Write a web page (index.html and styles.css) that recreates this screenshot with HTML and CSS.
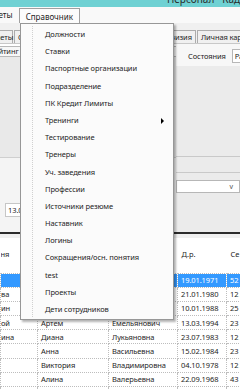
FILE: index.html
```html
<!DOCTYPE html>
<html lang="ru">
<head>
  <meta charset="UTF-8">
  <title>Персонал</title>
  <link rel="stylesheet" href="styles.css">
</head>
<body>
  <div class="window">

    <!-- title bar, mostly scrolled off the top -->
    <div class="titlebar">
      <span class="title">Персонал</span>
      <span class="title">Кадры</span>
    </div>

    <!-- main menu -->
    <div class="menubar">
      <span class="menu-item cut">Отчеты</span>
      <span class="menu-item open">Справочник</span>
    </div>

    <div class="strip"></div>

    <!-- page tabs -->
    <div class="tabs">
      <div class="tab cut">Отчеты</div>
      <div class="tab">Сотрудники</div>
      <div class="tab-gap"></div>
      <div class="tab revision">Ревизия</div>
      <div class="tab">Личная карточка</div>
    </div>

    <div class="content">
      <div class="left">
        <div class="head-row"><span class="cut-text">Рейтинг</span></div>
        <div class="gray-box"></div>
        <div class="white-box">
          <div class="date-input">13.01.2024</div>
        </div>
      </div>
      <div class="right">
        <div class="filter-row">
          <span class="label">Состояния</span>
          <span class="combo small">Работает</span>
        </div>
        <div class="gray-area">
          <div class="rule first"></div>
          <div class="rule"></div>
          <div class="combo wide"><span class="arrow">v</span></div>
        </div>
      </div>
    </div>

    <div class="divider"></div>

    <table class="grid">
      <colgroup>
        <col class="c-last"><col class="c-first"><col class="c-mid"><col class="c-date"><col class="c-age">
      </colgroup>
      <thead>
        <tr><th>ня</th><th>Имя</th><th>Отчество</th><th>Д.р.</th><th>Се</th></tr>
      </thead>
      <tbody id="rows"></tbody>
    </table>
  </div>

  <!-- open dropdown of "Справочник" -->
  <div class="dropdown">
    <div class="dd-item">Должности</div>
    <div class="dd-item">Ставки</div>
    <div class="dd-item">Паспортные организации</div>
    <div class="dd-item">Подразделение</div>
    <div class="dd-item">ПК Кредит Лимиты</div>
    <div class="dd-item sub">Тренинги</div>
    <div class="dd-item">Тестирование</div>
    <div class="dd-item">Тренеры</div>
    <div class="dd-item">Уч. заведения</div>
    <div class="dd-item">Профессии</div>
    <div class="dd-item">Источники резюме</div>
    <div class="dd-item">Наставник</div>
    <div class="dd-item">Логины</div>
    <div class="dd-item">Сокращения/осн. понятия</div>
    <div class="dd-item">test</div>
    <div class="dd-item">Проекты</div>
    <div class="dd-item">Дети сотрудников</div>
  </div>

  <script>
    const people = [
      ["", "", "", "19.01.1971", "52 г."],
      ["ва", "", "", "21.01.1980", "12 л."],
      ["ин", "", "", "10.01.1988", "25 л."],
      ["ой", "Артем", "Емельянович", "13.03.1994", "23"],
      ["ина", "Диана", "Лукьяновна", "23.07.1983", "12 л."],
      ["", "Анна", "Васильевна", "15.02.1984", "23"],
      ["", "Виктория", "Владимировна", "04.10.1978", "12 л."],
      ["", "Алина", "Валерьевна", "22.09.1968", "43 г."],
      ["", "Наталья", "Андреевна", "10.11.1989", "22"]
    ];

    const tbody = document.getElementById("rows");
    people.forEach((p, i) => {
      const tr = document.createElement("tr");
      if (i === 0) tr.className = "selected";
      tr.innerHTML = p.map(v => `<td>${v}</td>`).join("");
      tbody.appendChild(tr);
    });
  </script>
</body>
</html>
```

FILE: styles.css
```css
body {
  margin: 0;
  width: 240px;
  height: 389px;
  overflow: hidden;
  position: relative;
  font-family: "Noto Sans", "Open Sans", sans-serif;
  font-size: 7.5px;
  letter-spacing: -0.1px;
  color: #1e1e1e;
  background: #f0f0f0;
}

.window { width: 240px; height: 389px; overflow: hidden; }

/* title bar */
.titlebar {
  height: 7px;
  background: #6fd1d3;
  display: flex;
  gap: 8px;
  padding-left: 167px;
  overflow: hidden;
  white-space: nowrap;
}
.title { font-size: 10px; line-height: 10px; margin-top: -6px; color: #2b2b2b; letter-spacing: 0; }

/* menu bar */
.menubar {
  height: 16px;
  background: #f9f9f9;
  display: flex;
  white-space: nowrap;
  font-size: 8px;
  letter-spacing: 0;
}
.menu-item { line-height: 16px; }
.menu-item.cut { margin-left: -16px; padding-right: 6px; }
.menu-item.open {
  background: #fcfcfc;
  border: 1px solid #a0a0a0;
  border-bottom: none;
  margin-top: 1px;
  line-height: 15px;
  width: 61px;
  padding-left: 6px;
  box-sizing: border-box;
  position: relative;
  z-index: 3;
}

.strip { height: 7px; background: #f0f0f0; }

/* tabs */
.tabs {
  height: 14px;
  display: flex;
  gap: 1px;
  white-space: nowrap;
  border-bottom: 1px solid #c8c8c8;
  box-sizing: border-box;
}
.tab {
  border: 1px solid #acacac;
  border-bottom: none;
  background: #f0f0f0;
  padding: 0 3px;
  line-height: 13px;
  flex: none;
}
.tab.cut { margin-left: -17px; width: 30px; box-sizing: border-box; text-align: right; padding-right: 2px; }
.tab-gap { flex: none; width: 90px; }
.tab.revision { width: 40px; box-sizing: border-box; text-align: right; }

/* upper panels */
.content {
  display: grid;
  grid-template-columns: 176px 64px;
  height: 188px;
}
.left { background: #fff; padding-top: 2px; }
.head-row {
  height: 9px;
  border-top: 1px solid #b8b8b8;
  border-bottom: 1px solid #b8b8b8;
  line-height: 9px;
  white-space: nowrap;
  overflow: hidden;
  background: #f7f7f7;
}
.cut-text { margin-left: -10px; }
.gray-box { height: 100px; background: #e9e9e9; border-bottom: 1px solid #cfcfcf; }
.white-box { height: 74px; background: #f4f4f4; padding-top: 45px; box-sizing: border-box; padding-left: 5px; }
.date-input {
  width: 60px;
  height: 12px;
  background: #fff;
  border: 1px solid #c6c6c6;
  line-height: 12px;
  padding-left: 2px;
  white-space: nowrap;
}

.right { background: #f3f3f3; }
.filter-row {
  height: 22px;
  display: flex;
  align-items: center;
  padding: 2px 0 0 12px;
  box-sizing: border-box;
  gap: 6px;
  white-space: nowrap;
  background: #f7f7f7;
}
.combo {
  background: #fff;
  border: 1px solid #b7b7b7;
  height: 12px;
  line-height: 12px;
  padding-left: 2px;
}
.combo.small { width: 40px; }
.gray-area { height: 166px; background: #ebebeb; padding-top: 90px; box-sizing: border-box; }
.rule { height: 1px; background: #c9c9c9; margin-bottom: 15px; }
.combo.wide { height: 11px; display: flex; justify-content: flex-end; padding-right: 6px; margin-top: -8px; }
.arrow { font-size: 7px; color: #555; }

.divider { height: 2px; background: #2c2c2c; }

/* grid */
.grid {
  table-layout: fixed;
  width: 270px;
  border-collapse: collapse;
  background: #fff;
  white-space: nowrap;
  margin-top: 4px;
}
.c-last { width: 37px; }
.c-first { width: 71px; }
.c-mid { width: 69px; }
.c-date { width: 49px; }
.c-age { width: 44px; }
.grid th {
  font-weight: normal;
  text-align: left;
  height: 35px;
  padding: 11px 0 0 4px;
  box-sizing: border-box;
  vertical-align: top;
  overflow: hidden;
}
.grid td {
  height: 14.2px;
  padding: 0 0 0 3px;
  box-sizing: border-box;
  border: 1px dotted #bdbdbd;
  overflow: hidden;
}
.grid td:first-child, .grid th:first-child { padding-left: 0; }
.grid tr.selected td { background: #3399ff; color: #fff; }

/* dropdown menu */
.dropdown {
  position: absolute;
  left: 20px;
  top: 23px;
  width: 154px;
  padding: 2px 0 1px;
  box-sizing: border-box;
  background: #fbfbfb;
  border: 1px solid #979797;
  box-shadow: 2px 2px 2px rgba(0, 0, 0, 0.3);
  z-index: 2;
  white-space: nowrap;
}
.dropdown::before {
  content: "";
  position: absolute;
  left: 11px;
  top: 2px;
  bottom: 2px;
  border-left: 1px dotted #d0d0d0;
}
.dd-item {
  height: 17.2px;
  line-height: 17.2px;
  padding-left: 24px;
  position: relative;
}
.dd-item.sub::after {
  content: "";
  position: absolute;
  right: 9px;
  top: 6px;
  border-left: 3px solid #000;
  border-top: 3px solid transparent;
  border-bottom: 3px solid transparent;
}
```
